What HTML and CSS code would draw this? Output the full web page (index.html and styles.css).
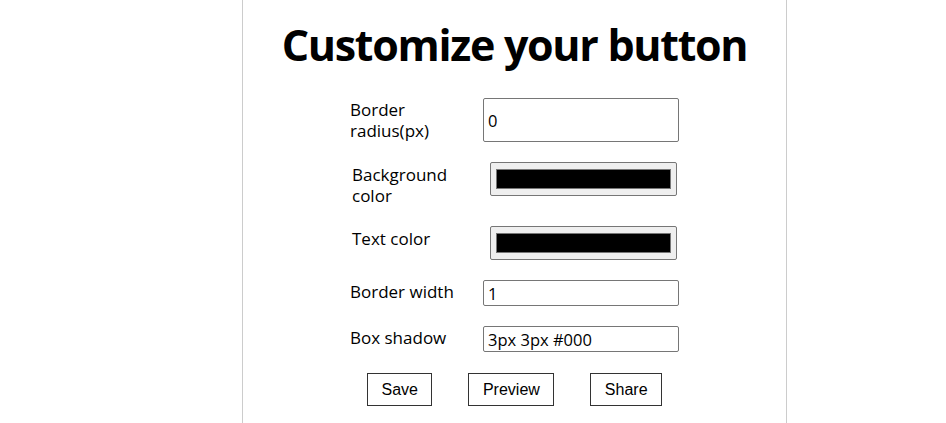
FILE: index.html
```html
<!DOCTYPE html>
<html lang="en">
<head>
<meta charset="utf-8">
<title>Customize your button</title>
<link rel="stylesheet" href="styles.css">
</head>
<body>
<main class="panel">
  <h1 class="title">Customize your button</h1>
  <form class="form">
    <div class="row">
      <label class="label" for="radius">Border radius(px)</label>
      <input class="field field-tall" id="radius" type="text" value="0">
    </div>
    <div class="row row-color">
      <label class="label" for="bg">Background color</label>
      <input class="swatch" id="bg" type="color" value="#000000">
    </div>
    <div class="row row-color">
      <label class="label" for="fg">Text color</label>
      <input class="swatch" id="fg" type="color" value="#000000">
    </div>
    <div class="row">
      <label class="label" for="bw">Border width</label>
      <input class="field" id="bw" type="text" value="1">
    </div>
    <div class="row">
      <label class="label" for="bs">Box shadow</label>
      <input class="field" id="bs" type="text" value="3px 3px #000">
    </div>
    <div class="actions">
      <button class="btn" type="button">Save</button>
      <button class="btn" type="button">Preview</button>
      <button class="btn" type="button">Share</button>
    </div>
  </form>
</main>
</body>
</html>
```

FILE: styles.css
```css
html, body {
  margin: 0;
  padding: 0;
  background: #fff;
}

body {
  font-family: "Open Sans", "Noto Sans", sans-serif;
  color: #000;
  height: 423px;
  overflow: hidden;
}

.panel {
  box-sizing: border-box;
  width: 545px;
  min-height: 423px;
  margin-left: 242px;
  border-left: 1px solid #cccccc;
  border-right: 1px solid #cccccc;
  display: flex;
  flex-direction: column;
  align-items: center;
}

.title {
  margin: 19px 0 0;
  font-size: 43px;
  line-height: 52px;
  font-weight: 700;
  letter-spacing: -1.3px;
  text-align: center;
}

.form {
  margin-top: 27px;
  width: 329px;
  display: flex;
  flex-direction: column;
  gap: 20px;
}

.row {
  display: flex;
  align-items: flex-start;
}

.label {
  width: 133px;
  flex: none;
  font-size: 17px;
  line-height: 21px;
  padding-right: 22px;
  padding-top: 1px;
  box-sizing: border-box;
}

.field {
  box-sizing: border-box;
  width: 196px;
  height: 26px;
  margin: 0;
  padding: 1px 4px;
  border: 1px solid #767676;
  border-radius: 2px;
  font-family: "Open Sans", "Noto Sans", sans-serif;
  font-size: 16.5px;
  color: #000;
  background: #fff;
}

.field-tall {
  height: 44px;
}

.row:first-child .label {
  padding-top: 1px;
}

.row-color .label {
  margin-left: 2px;
  width: 138px;
  padding-top: 2px;
}

.swatch {
  box-sizing: border-box;
  width: 187px;
  height: 34px;
  margin: 0;
  padding: 1px 2px;
  border: 1px solid #767676;
  border-radius: 2px;
  background: #efefef;
  cursor: pointer;
}

.swatch::-webkit-color-swatch-wrapper {
  padding: 5px 3px;
}

.swatch::-webkit-color-swatch {
  border: 1px solid #777;
  border-radius: 0;
}

.actions {
  margin-top: 1px;
  display: flex;
  justify-content: center;
  gap: 36px;
}

.btn {
  box-sizing: border-box;
  height: 33px;
  padding: 0 13.5px;
  margin: 0;
  font-family: "Liberation Sans", Arial, sans-serif;
  font-size: 16px;
  color: #000;
  background: #fff;
  border: 1px solid #333;
  border-radius: 0;
}
```
